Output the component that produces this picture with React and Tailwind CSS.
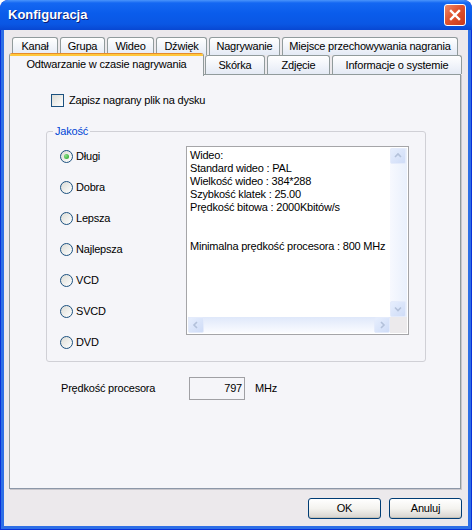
import React from "react";

function Tab({ label, w }) {
  return (
    <div
      className={`${w} h-full shrink-0 flex items-center justify-center border border-b-0 border-[#919B9C] rounded-t-[3px] bg-gradient-to-b from-[#FFFFFF] to-[#E4EAF5] text-[11px] text-black leading-none`}
    >
      {label}
    </div>
  );
}

function Radio({ label, checked }) {
  return (
    <div className="flex items-center h-[13px] gap-[3px]">
      <div className="w-[13px] h-[13px] rounded-full border border-[#1C5180] bg-gradient-to-br from-[#DCDCD6] to-[#FFFFFF] flex items-center justify-center shrink-0">
        {checked && (
          <div className="w-[5px] h-[5px] rounded-full bg-[radial-gradient(circle_at_35%_35%,#8BE08B,#21A121)]" />
        )}
      </div>
      <span className="text-[11px] leading-none text-black">{label}</span>
    </div>
  );
}

function Chevron({ dir }) {
  const d = {
    up: "M2 6 L5 3 L8 6",
    down: "M2 3.5 L5 6.5 L8 3.5",
    left: "M6 2 L3 5 L6 8",
    right: "M4 2 L7 5 L4 8",
  }[dir];
  return (
    <svg width="10" height="10" viewBox="0 0 10 10">
      <path d={d} fill="none" stroke="#B3C1DA" strokeWidth="1.6" />
    </svg>
  );
}

function ArrowBtn({ dir }) {
  return (
    <div className="w-[16px] h-[16px] shrink-0 rounded-[2px] border border-[#E4EBFB] bg-gradient-to-br from-[#E6EEFD] to-[#CFDCF7] flex items-center justify-center">
      <Chevron dir={dir} />
    </div>
  );
}

export default function App() {
  return (
    <div className="w-[472px] h-[530px] flex flex-col rounded-t-[8px] overflow-hidden bg-[#0831D9] px-[1px] pb-[1px] font-['Liberation_Sans',Arial,sans-serif] tracking-[-0.2px]">
      {/* Title bar */}
      <div className="h-[30px] shrink-0 -mx-[1px] rounded-t-[8px] bg-[linear-gradient(to_bottom,#4A94FB_0%,#1467F2_10%,#0A5CEB_45%,#0A57E4_80%,#0847D2_100%)] flex items-center pl-[8px] pr-[6px]">
        <span className="text-white font-bold text-[13px] tracking-normal [text-shadow:1px_1px_0_#0A1E78]">
          Konfiguracja
        </span>
        <div className="ml-auto w-[22px] h-[22px] rounded-[3px] border border-white bg-[linear-gradient(135deg,#F08A6A_0%,#E0532F_45%,#C8391A_100%)] flex items-center justify-center">
          <svg width="12" height="12" viewBox="0 0 12 12">
            <path d="M2 2 L10 10 M10 2 L2 10" stroke="white" strokeWidth="2.4" strokeLinecap="square" />
          </svg>
        </div>
      </div>

      {/* Body */}
      <div className="flex-1 flex flex-col bg-[#ECE9EC] border-x-[3px] border-b-[3px] border-[#2E6FE6] pl-[5px] pr-[6px] pt-[7px]">
        {/* Tabs */}
        <div className="h-[37px] flex flex-col shrink-0">
          <div className="h-[18px] flex gap-[2px] pl-[3px]">
            <Tab label="Kanał" w="w-[46px]" />
            <Tab label="Grupa" w="w-[45px]" />
            <Tab label="Wideo" w="w-[47px]" />
            <Tab label="Dźwięk" w="w-[51px]" />
            <Tab label="Nagrywanie" w="w-[71px]" />
            <Tab label="Miejsce przechowywania nagrania" w="w-[176px]" />
          </div>
          <div className="h-[19px] flex items-end">
            <div className="relative z-10 w-[195px] h-[23px] -mt-[2px] top-[2px] shrink-0 flex flex-col border-x border-[#919B9C] rounded-t-[3px] bg-[#F5F5F9] overflow-hidden">
              <div className="h-[1px] bg-[#E68B2C] shrink-0" />
              <div className="h-[2px] bg-[#FFC83C] shrink-0" />
              <div className="flex-1 flex items-center justify-center text-[11px] leading-none text-black pb-[3px]">
                Odtwarzanie w czasie nagrywania
              </div>
            </div>
            <div className="h-full flex gap-[2px] ml-[1px]">
              <Tab label="Skórka" w="w-[60px]" />
              <Tab label="Zdjęcie" w="w-[63px]" />
              <Tab label="Informacje o systemie" w="w-[130px]" />
            </div>
          </div>
        </div>

        {/* Panel */}
        <div className="w-[452px] h-[415px] shrink-0 border border-[#919B9C] border-b-[#8C97A8] shadow-[1px_1px_0_#C8C6CC] bg-[#F5F5F9] flex flex-col pl-[36px] pt-[19px]">
          <div className="flex items-center gap-[5px] ml-[5px] h-[13px]">
            <div className="w-[13px] h-[13px] border border-[#1C5180] bg-gradient-to-br from-[#DCDCD6] to-[#FFFFFF]" />
            <span className="text-[11px] leading-none text-black">Zapisz nagrany plik na dysku</span>
          </div>

          {/* Group box */}
          <div className="relative mt-[24px] w-[380px] h-[231px] border border-[#D0D0D6] rounded-[3px] flex pl-[13px] pt-[14px]">
            <span className="absolute -top-[7px] left-[6px] px-[2px] bg-[#F5F5F9] text-[11px] leading-[13px] text-[#0046D5]">
              Jakość
            </span>
            <div className="w-[126px] shrink-0 flex flex-col gap-[18px] pt-[4px]">
              <Radio label="Długi" checked />
              <Radio label="Dobra" />
              <Radio label="Lepsza" />
              <Radio label="Najlepsza" />
              <Radio label="VCD" />
              <Radio label="SVCD" />
              <Radio label="DVD" />
            </div>
            <div className="w-[223px] h-[189px] border border-[#A5A5A8] bg-white p-[1px] grid grid-cols-[1fr_17px] grid-rows-[1fr_16px]">
              <div className="pl-[2px] pt-[1px] text-[11px] leading-[13px] text-black whitespace-pre overflow-hidden">
                {"Wideo:\nStandard wideo : PAL\nWielkość wideo : 384*288\nSzybkość klatek : 25.00\nPrędkość bitowa : 2000Kbitów/s\n\n\nMinimalna prędkość procesora : 800 MHz"}
              </div>
              <div className="flex flex-col justify-between bg-gradient-to-r from-[#F7F9FE] to-[#E9F0FC] pr-[1px]">
                <ArrowBtn dir="up" />
                <ArrowBtn dir="down" />
              </div>
              <div className="flex justify-between bg-gradient-to-b from-[#DFE8FA] to-[#FBFCFF]">
                <ArrowBtn dir="left" />
                <ArrowBtn dir="right" />
              </div>
              <div className="bg-[#ECEAEC]" />
            </div>
          </div>

          {/* CPU speed */}
          <div className="flex items-center mt-[15px] ml-[15px] h-[23px]">
            <span className="w-[128px] shrink-0 text-[11px] leading-none text-black">Prędkość procesora</span>
            <div className="w-[56px] h-[23px] border border-[#A0A0A4] flex items-center justify-end pr-[2px] text-[11px] leading-none text-black">
              797
            </div>
            <span className="ml-[10px] text-[11px] leading-none text-black">MHz</span>
          </div>
        </div>

        {/* Buttons */}
        <div className="flex justify-end gap-[8px] mt-[9px]">
          <button className="w-[73px] h-[21px] rounded-[3px] border border-[#003C74] bg-gradient-to-b from-[#FFFFFF] via-[#F4F3EF] to-[#D6D3CE] text-[11px] leading-none text-black shadow-[inset_0_-1px_0_#C5C2B8]">
            OK
          </button>
          <button className="w-[73px] h-[21px] rounded-[3px] border border-[#003C74] bg-gradient-to-b from-[#FFFFFF] via-[#F4F3EF] to-[#D6D3CE] text-[11px] leading-none text-black shadow-[inset_0_-1px_0_#C5C2B8]">
            Anuluj
          </button>
        </div>
      </div>
    </div>
  );
}
